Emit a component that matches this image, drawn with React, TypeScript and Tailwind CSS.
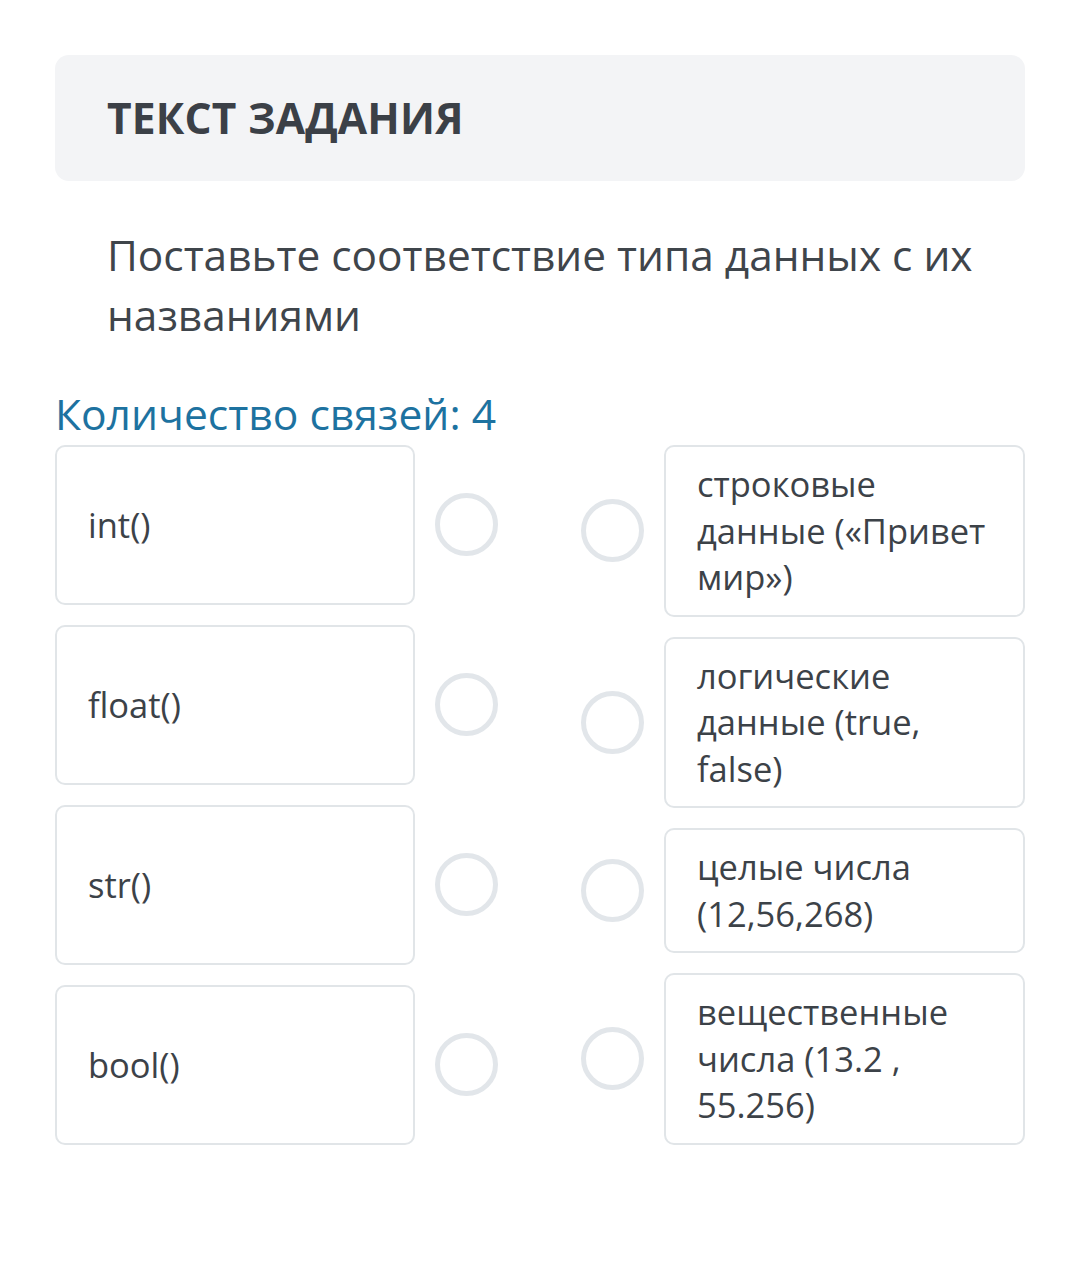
import React from "react";

const left = ["int()", "float()", "str()", "bool()"];
const right = [
  "строковые данные («Привет мир»)",
  "логические данные (true, false)",
  "целые числа (12,56,268)",
  "вещественные числа (13.2 , 55.256)",
];

function Circle() {
  return (
    <div className="w-[63px] h-[63px] shrink-0 rounded-full border-[5px] border-[#e2e6ea] bg-white" />
  );
}

export default function App() {
  return (
    <div
      className="w-[1080px] h-[1287px] bg-white px-[55px] pt-[55px] text-[#3c4248]"
      style={{ fontFamily: '"Open Sans", "Noto Sans", sans-serif' }}
    >
      <div className="h-[126px] rounded-[14px] bg-[#f3f4f6] flex items-center pl-[52px]">
        <div className="text-[42.5px] font-bold leading-none tracking-[0.2px] text-[#3b4047]">
          ТЕКСТ ЗАДАНИЯ
        </div>
      </div>
      <div className="mt-[44px] pl-[52px] pr-[30px] text-[42.4px] leading-[60px] text-[#3f454b]">
        Поставьте соответствие типа данных с их названиями
      </div>
      <div className="mt-[43px] text-[42.6px] leading-[50px] text-[#1d72a0]">
        Количество связей: 4
      </div>
      <div className="mt-[7px] flex justify-between">
        <div className="flex flex-col gap-[20px] w-[443px]">
          {left.map((t) => (
            <div key={t} className="flex-1 flex items-center gap-[20px]">
              <div className="w-[360px] self-stretch rounded-[10px] border-2 border-[#e1e5e8] flex items-center pl-[31px] text-[34.5px] text-[#3c4248]">
                {t}
              </div>
              <Circle />
            </div>
          ))}
        </div>
        <div className="flex flex-col gap-[20px] w-[444px]">
          {right.map((t) => (
            <div key={t} className="flex items-center gap-[20px]">
              <Circle />
              <div className="w-[361px] rounded-[10px] border-2 border-[#e1e5e8] pl-[31px] pr-[20px] py-[14px] text-[34.5px] leading-[46.5px] text-[#3c4248]">
                {t}
              </div>
            </div>
          ))}
        </div>
      </div>
    </div>
  );
}
